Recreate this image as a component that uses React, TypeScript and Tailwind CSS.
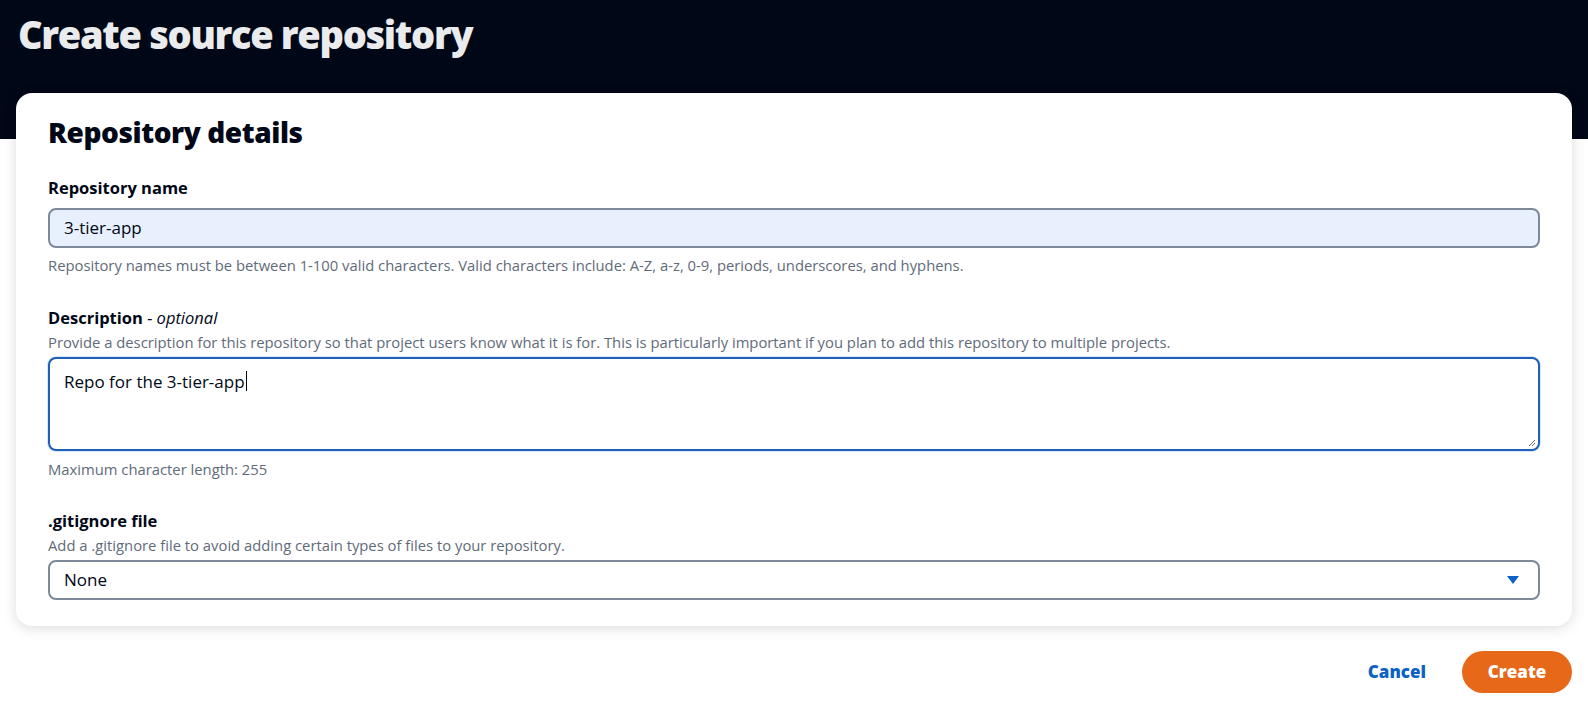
import React from 'react';

const font = "font-['Open_Sans',_'Noto_Sans',_sans-serif]";

function Field({
  label,
  optional,
  hint,
  children,
}: {
  label: string;
  optional?: boolean;
  hint?: string;
  children: React.ReactNode;
}) {
  return (
    <div>
      <div className="text-[16.5px] leading-6 font-bold text-[#000716]">
        {label}
        {optional && (
          <span className="font-normal italic"> - optional</span>
        )}
      </div>
      {hint && (
        <div className="mt-[2px] text-[14.8px] leading-5 text-[#5f6b7a]">{hint}</div>
      )}
      {children}
    </div>
  );
}

export default function App() {
  return (
    <div className={`min-h-screen bg-white ${font}`}>
      {/* Header band */}
      <div className="h-[139px] bg-[#000716] px-[18px] pt-[10px]">
        <h1 className="text-[38px] leading-[48px] font-extrabold tracking-[-0.035em] text-[#e9ebed]">
          Create source repository
        </h1>
      </div>

      {/* Card */}
      <div className="relative mx-4 -mt-[46px] rounded-2xl bg-white px-8 pt-[21px] pb-[26px] shadow-[0_2px_14px_0_rgba(0,7,22,0.14)]">
        <h2 className="text-[28px] leading-9 font-extrabold tracking-[-0.015em] text-[#000716]">
          Repository details
        </h2>

        <div className="mt-[26px]">
          <Field label="Repository name">
            <div className="mt-2 flex h-10 items-center rounded-lg border-2 border-[#7d8998] bg-[#e8f0fe] px-[14px] text-[17px] text-[#000716]">
              3-tier-app
            </div>
            <div className="mt-[7px] text-[14.8px] leading-5 text-[#5f6b7a]">
              Repository names must be between 1-100 valid characters. Valid characters include: A-Z, a-z, 0-9, periods, underscores, and hyphens.
            </div>
          </Field>
        </div>

        <div className="mt-[31px]">
          <Field
            label="Description"
            optional
            hint="Provide a description for this repository so that project users know what it is for. This is particularly important if you plan to add this repository to multiple projects."
          >
            <div className="relative mt-[5px] h-[94px] rounded-lg border-2 border-[#1f5fb5] bg-white px-[14px] pt-[9px] text-[17px] leading-6 text-[#000716] shadow-[0_0_0_1px_#d6e8fb]">
              Repo for the 3-tier-app
              <span className="ml-[1px] inline-block h-[20px] w-[1px] translate-y-[3px] bg-black" />
              <svg
                className="absolute right-[2px] bottom-[2px]"
                width="9"
                height="9"
                viewBox="0 0 9 9"
              >
                <path d="M8 2 L2 8 M8 5 L5 8" stroke="#6b6b6b" strokeWidth="1" />
              </svg>
            </div>
            <div className="mt-2 text-[14.8px] leading-5 text-[#5f6b7a]">
              Maximum character length: 255
            </div>
          </Field>
        </div>

        <div className="mt-[30px]">
          <Field
            label=".gitignore file"
            hint="Add a .gitignore file to avoid adding certain types of files to your repository."
          >
            <div className="mt-[5px] flex h-10 items-center justify-between rounded-lg border-2 border-[#7d8998] bg-white pr-[18px] pl-[14px] text-[17px] text-[#000716]">
              <span>None</span>
              <svg width="14" height="10" viewBox="0 0 14 10">
                <path d="M1 1 H13 L7 9 Z" fill="#0b62c4" />
              </svg>
            </div>
          </Field>
        </div>
      </div>

      {/* Actions */}
      <div className="mt-[25px] flex items-center justify-end gap-9 pr-4">
        <button className="text-[17px] font-extrabold text-[#0b62c4]">Cancel</button>
        <button className="h-[42px] w-[110px] rounded-full bg-[#e8681a] text-[17px] font-extrabold text-white">
          Create
        </button>
      </div>
    </div>
  );
}
